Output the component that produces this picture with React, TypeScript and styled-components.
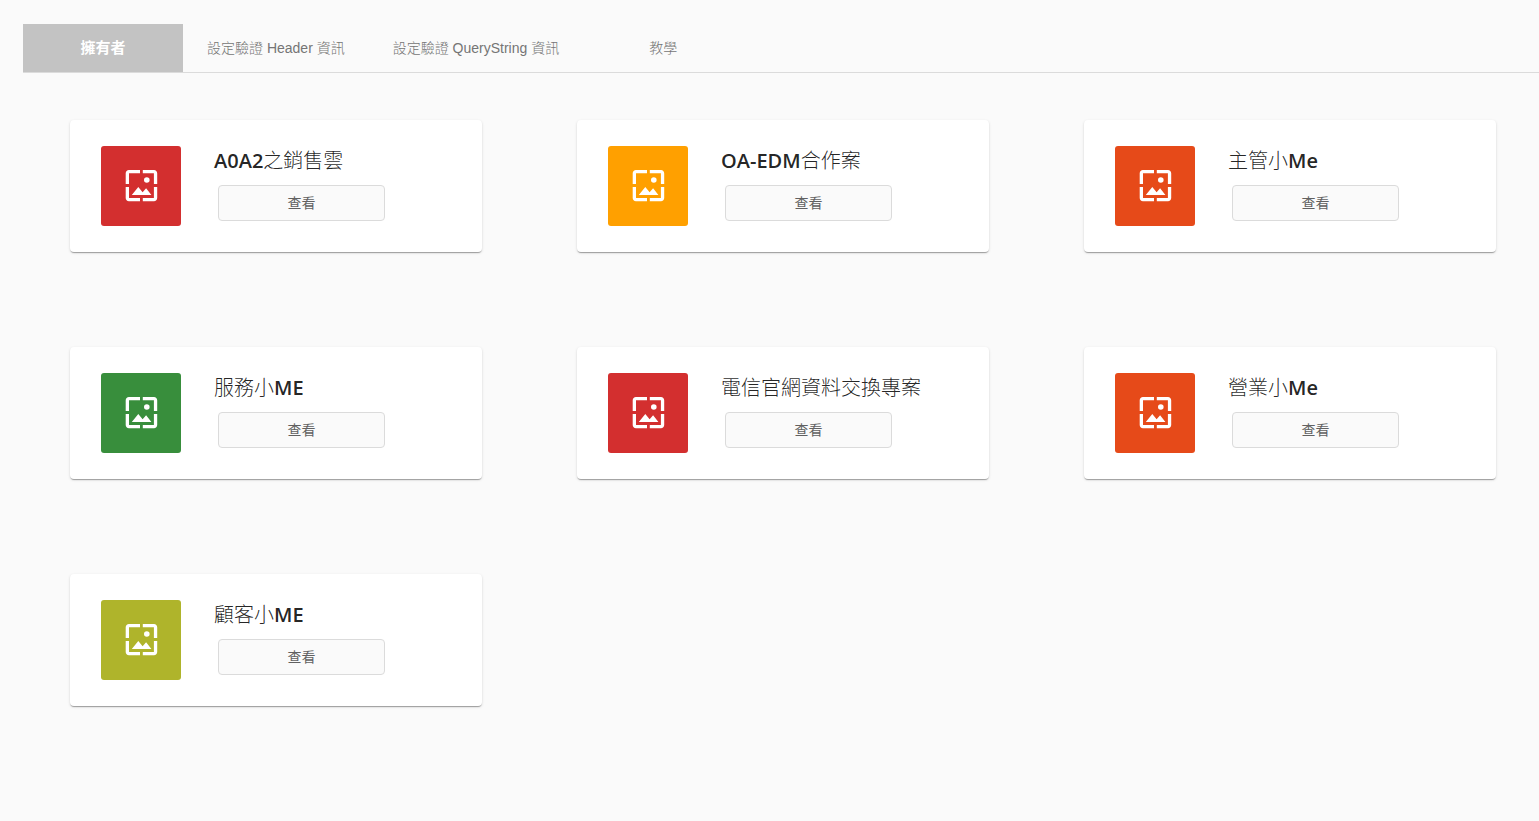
import React, { useState } from 'react';
import styled, { createGlobalStyle } from 'styled-components';

const GlobalStyle = createGlobalStyle`
  *, *::before, *::after { box-sizing: border-box; }
  body {
    margin: 0;
    background: #fafafa;
    font-family: "Liberation Sans", "Noto Sans CJK TC", sans-serif;
  }
`;

const Page = styled.div`
  padding: 24px 0 48px;
`;

const TabBar = styled.div`
  display: flex;
  margin-left: 23px;
  border-bottom: 1px solid #dbdbdb;
`;

const Tab = styled.button<{ $active: boolean }>`
  min-width: 160px;
  height: 48px;
  padding: 0 24px;
  border: 0;
  background: ${(p) => (p.$active ? '#c3c3c3' : 'transparent')};
  color: ${(p) => (p.$active ? '#fff' : '#757575')};
  font-family: inherit;
  font-size: ${(p) => (p.$active ? '15px' : '14px')};
  font-weight: ${(p) => (p.$active ? 700 : 300)};
  line-height: 20px;
  white-space: nowrap;
  cursor: pointer;
`;

const CardGrid = styled.main`
  display: grid;
  grid-template-columns: repeat(3, minmax(0, 1fr));
  gap: 95px;
  padding: 47px 43px 0 70px;
`;

const Card = styled.article`
  display: flex;
  gap: 33px;
  padding: 26px 31px;
  border-radius: 4px;
  background: #fff;
  box-shadow:
    0 2px 1px -1px rgba(0, 0, 0, 0.2),
    0 1px 1px 0 rgba(0, 0, 0, 0.14),
    0 1px 3px 0 rgba(0, 0, 0, 0.12);
`;

const Tile = styled.div<{ $color: string }>`
  display: flex;
  flex: none;
  align-items: center;
  justify-content: center;
  width: 80px;
  height: 80px;
  border-radius: 3px;
  background: ${(p) => p.$color};
  color: #fff;
`;

const CardBody = styled.div`
  display: flex;
  flex-direction: column;
  gap: 9px;
  min-width: 0;
`;

const Title = styled.h2`
  margin: 0;
  color: rgba(0, 0, 0, 0.87);
  font-family: "Open Sans", "Noto Sans CJK TC", sans-serif;
  font-size: 20px;
  font-weight: 300;
  line-height: 30px;
  white-space: nowrap;
`;

const Latin = styled.span`
  font-weight: 600;
`;

const ViewButton = styled.button`
  width: 167px;
  height: 36px;
  margin-left: 4px;
  padding: 0;
  border: 1px solid #dbdbdb;
  border-radius: 4px;
  background: #fafafa;
  color: #616161;
  font-family: inherit;
  font-size: 14px;
  line-height: 20px;
  cursor: pointer;
`;

const tabs = ['擁有者', '設定驗證 Header 資訊', '設定驗證 QueryString 資訊', '教學'];

const projects = [
  { name: 'A0A2之銷售雲', color: '#d32f2f' },
  { name: 'OA-EDM合作案', color: '#ffa000' },
  { name: '主管小Me', color: '#e64a19' },
  { name: '服務小ME', color: '#388e3c' },
  { name: '電信官網資料交換專案', color: '#d32f2f' },
  { name: '營業小Me', color: '#e64a19' },
  { name: '顧客小ME', color: '#afb42b' },
];

function WallpaperIcon() {
  return (
    <svg width="40" height="40" viewBox="0 0 40 40" fill="currentColor" aria-hidden="true">
      <path d="M19 4v3.2H8v10.8H4.7V7.2C4.7 5.4 6.1 4 7.9 4z" />
      <path d="M21.8 4h11.2c1.8 0 3.2 1.4 3.2 3.2V18h-3.3V7.2H21.8z" />
      <path d="M4.7 21H8v11.1h11v3.2H7.9c-1.8 0-3.2-1.4-3.2-3.2z" />
      <path d="M32.9 21h3.3v11.1c0 1.8-1.4 3.2-3.2 3.2H21.8v-3.2h11.1z" />
      <circle cx="25.8" cy="14" r="2.8" />
      <path d="M10.8 29.1L17.3 21l4.3 5.2 3.5-3.9 5.3 6.8z" />
    </svg>
  );
}

// Latin runs are set heavier than the Chinese characters around them.
function ProjectTitle({ name }: { name: string }) {
  const parts = name.split(/([A-Za-z0-9-]+)/).filter(Boolean);
  return (
    <Title>
      {parts.map((part, i) =>
        /^[A-Za-z0-9-]/.test(part) ? <Latin key={i}>{part}</Latin> : part,
      )}
    </Title>
  );
}

export default function App() {
  const [active, setActive] = useState(0);
  return (
    <Page lang="zh-Hant">
      <GlobalStyle />
      <TabBar role="tablist">
        {tabs.map((label, i) => (
          <Tab
            key={label}
            role="tab"
            aria-selected={i === active}
            $active={i === active}
            onClick={() => setActive(i)}
          >
            {label}
          </Tab>
        ))}
      </TabBar>
      <CardGrid>
        {projects.map((project) => (
          <Card key={project.name}>
            <Tile $color={project.color}>
              <WallpaperIcon />
            </Tile>
            <CardBody>
              <ProjectTitle name={project.name} />
              <ViewButton>查看</ViewButton>
            </CardBody>
          </Card>
        ))}
      </CardGrid>
    </Page>
  );
}
